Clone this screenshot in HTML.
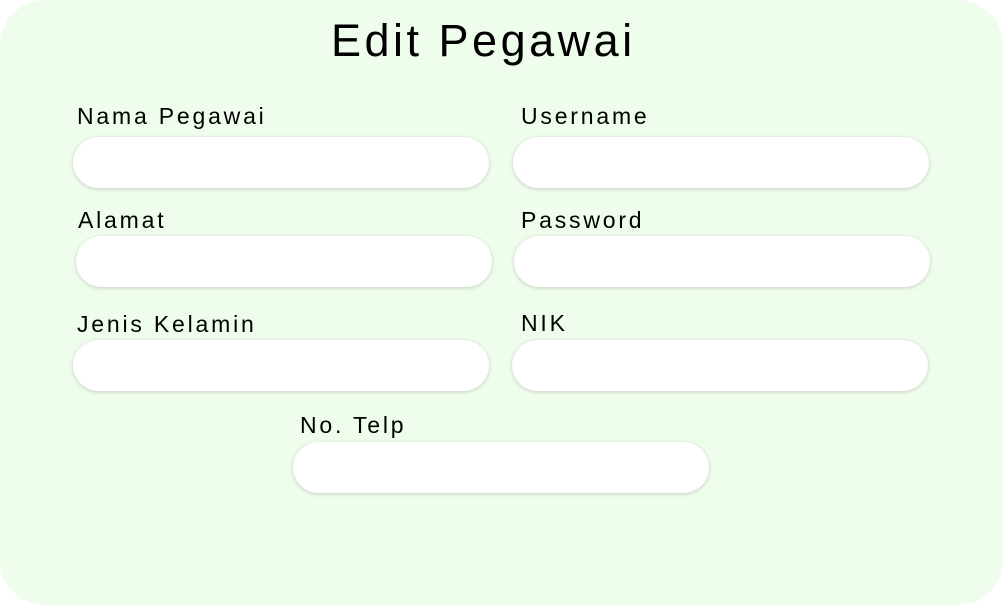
<!DOCTYPE html>
<html><head><meta charset="utf-8"><style>
html,body{margin:0;padding:0;background:#fff;}
body{width:1003px;height:605px;position:relative;overflow:hidden;font-family:"Liberation Sans",sans-serif;}
.card{position:absolute;left:0;top:0;width:1003px;height:605px;background:#effdec;border-radius:45px;}
h1{position:absolute;left:331px;top:13px;margin:0;white-space:nowrap;font-weight:400;font-size:45px;letter-spacing:3.5px;color:#000;line-height:56px;}
.l{position:absolute;font-size:23px;letter-spacing:2.8px;color:#000;line-height:26px;white-space:nowrap;}
.f{position:absolute;width:416px;height:51px;background:#fff;border-radius:26px;box-shadow:0 1px 4px rgba(0,0,0,0.18);}
</style></head><body>
<div class="card"></div>
<h1>Edit Pegawai</h1>
<div class="l" style="left:77px;top:103px">Nama Pegawai</div>
<div class="f" style="left:73px;top:137px"></div>
<div class="l" style="left:521px;top:103px">Username</div>
<div class="f" style="left:513px;top:137px"></div>
<div class="l" style="left:78px;top:207px">Alamat</div>
<div class="f" style="left:76px;top:236px"></div>
<div class="l" style="left:521px;top:207px">Password</div>
<div class="f" style="left:514px;top:236px"></div>
<div class="l" style="left:77px;top:311px">Jenis Kelamin</div>
<div class="f" style="left:73px;top:340px"></div>
<div class="l" style="left:521px;top:310px">NIK</div>
<div class="f" style="left:512px;top:340px"></div>
<div class="l" style="left:300px;top:412px">No. Telp</div>
<div class="f" style="left:293px;top:442px"></div>
</body></html>
